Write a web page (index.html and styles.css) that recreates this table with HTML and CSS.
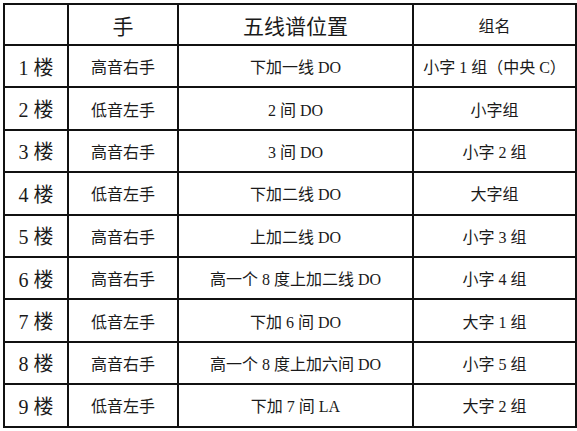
FILE: index.html
```html
<!DOCTYPE html>
<html lang="zh">
<head>
<meta charset="utf-8">
<link rel="stylesheet" href="styles.css">
</head>
<body>
<table class="keys">
  <colgroup>
    <col class="c-floor">
    <col class="c-hand">
    <col class="c-pos">
    <col class="c-group">
  </colgroup>
  <thead>
    <tr class="head-row">
      <th></th>
      <th class="h-big">手</th>
      <th class="h-big">五线谱位置</th>
      <th class="h-small">组名</th>
    </tr>
  </thead>
  <tbody>
    <tr><td class="floor">1 楼</td><td>高音右手</td><td>下加一线 DO</td><td>小字 1 组（中央 C）</td></tr>
    <tr><td class="floor">2 楼</td><td>低音左手</td><td>2 间 DO</td><td>小字组</td></tr>
    <tr><td class="floor">3 楼</td><td>高音右手</td><td>3 间 DO</td><td>小字 2 组</td></tr>
    <tr><td class="floor">4 楼</td><td>低音左手</td><td>下加二线 DO</td><td>大字组</td></tr>
    <tr><td class="floor">5 楼</td><td>高音右手</td><td>上加二线 DO</td><td>小字 3 组</td></tr>
    <tr><td class="floor">6 楼</td><td>高音右手</td><td>高一个 8 度上加二线 DO</td><td>小字 4 组</td></tr>
    <tr><td class="floor">7 楼</td><td>低音左手</td><td>下加 6 间 DO</td><td>大字 1 组</td></tr>
    <tr><td class="floor">8 楼</td><td>高音右手</td><td>高一个 8 度上加六间 DO</td><td>小字 5 组</td></tr>
    <tr><td class="floor">9 楼</td><td>低音左手</td><td>下加 7 间 LA</td><td>大字 2 组</td></tr>
  </tbody>
</table>
</body>
</html>
```
FILE: styles.css
```css
html, body {
  margin: 0;
  padding: 0;
  background: #ffffff;
}

body {
  padding: 3px 0 0 3px;
}

.keys {
  border-collapse: collapse;
  table-layout: fixed;
  width: 572px;
  font-family: "Liberation Serif", "Noto Sans CJK SC", serif;
  color: #1a1a1a;
}

.c-floor { width: 64px; }
.c-hand { width: 110px; }
.c-pos { width: 235px; }
.c-group { width: 163px; }

.keys th,
.keys td {
  border: 2px solid #111;
  padding: 0;
  text-align: center;
  vertical-align: middle;
  font-weight: normal;
  white-space: nowrap;
}

.head-row {
  height: 41px;
}

.keys tbody tr {
  height: 42.4px;
}

.h-big {
  font-size: 21px;
}

.h-small {
  font-size: 16px;
}

.keys td {
  font-size: 16px;
}

.keys td.floor {
  font-size: 20px;
}
```
